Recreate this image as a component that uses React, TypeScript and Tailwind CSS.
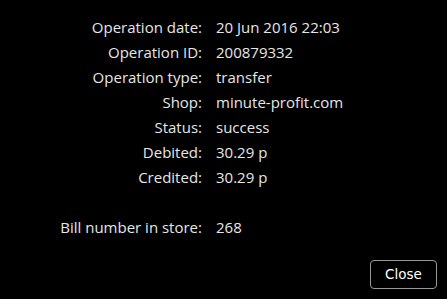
const rows: [string, string][] = [
  ["Operation date:", "20 Jun 2016 22:03"],
  ["Operation ID:", "200879332"],
  ["Operation type:", "transfer"],
  ["Shop:", "minute-profit.com"],
  ["Status:", "success"],
  ["Debited:", "30.29 p"],
  ["Credited:", "30.29 p"],
];

export default function App() {
  return (
    <div className="flex h-[299px] w-[447px] flex-col bg-black font-['Open_Sans',sans-serif] text-[15px] text-[#e6e6e6]">
      <div className="grid grid-cols-[202px_1fr] gap-x-[14px] pt-[15px] leading-[25px]">
        {rows.map(([k, v]) => (
          <div key={k} className="contents">
            <div className="text-right">{k}</div>
            <div>{v}</div>
          </div>
        ))}
        <div className="mt-[25px] text-right">Bill number in store:</div>
        <div className="mt-[25px]">268</div>
      </div>
      <div className="mt-auto flex justify-end pr-[10px] pb-[10px]">
        <button className="h-[29px] w-[67px] rounded-[4px] border border-[#9a9a9a] font-['DejaVu_Sans',sans-serif] text-[13.5px] text-white">
          Close
        </button>
      </div>
    </div>
  );
}
